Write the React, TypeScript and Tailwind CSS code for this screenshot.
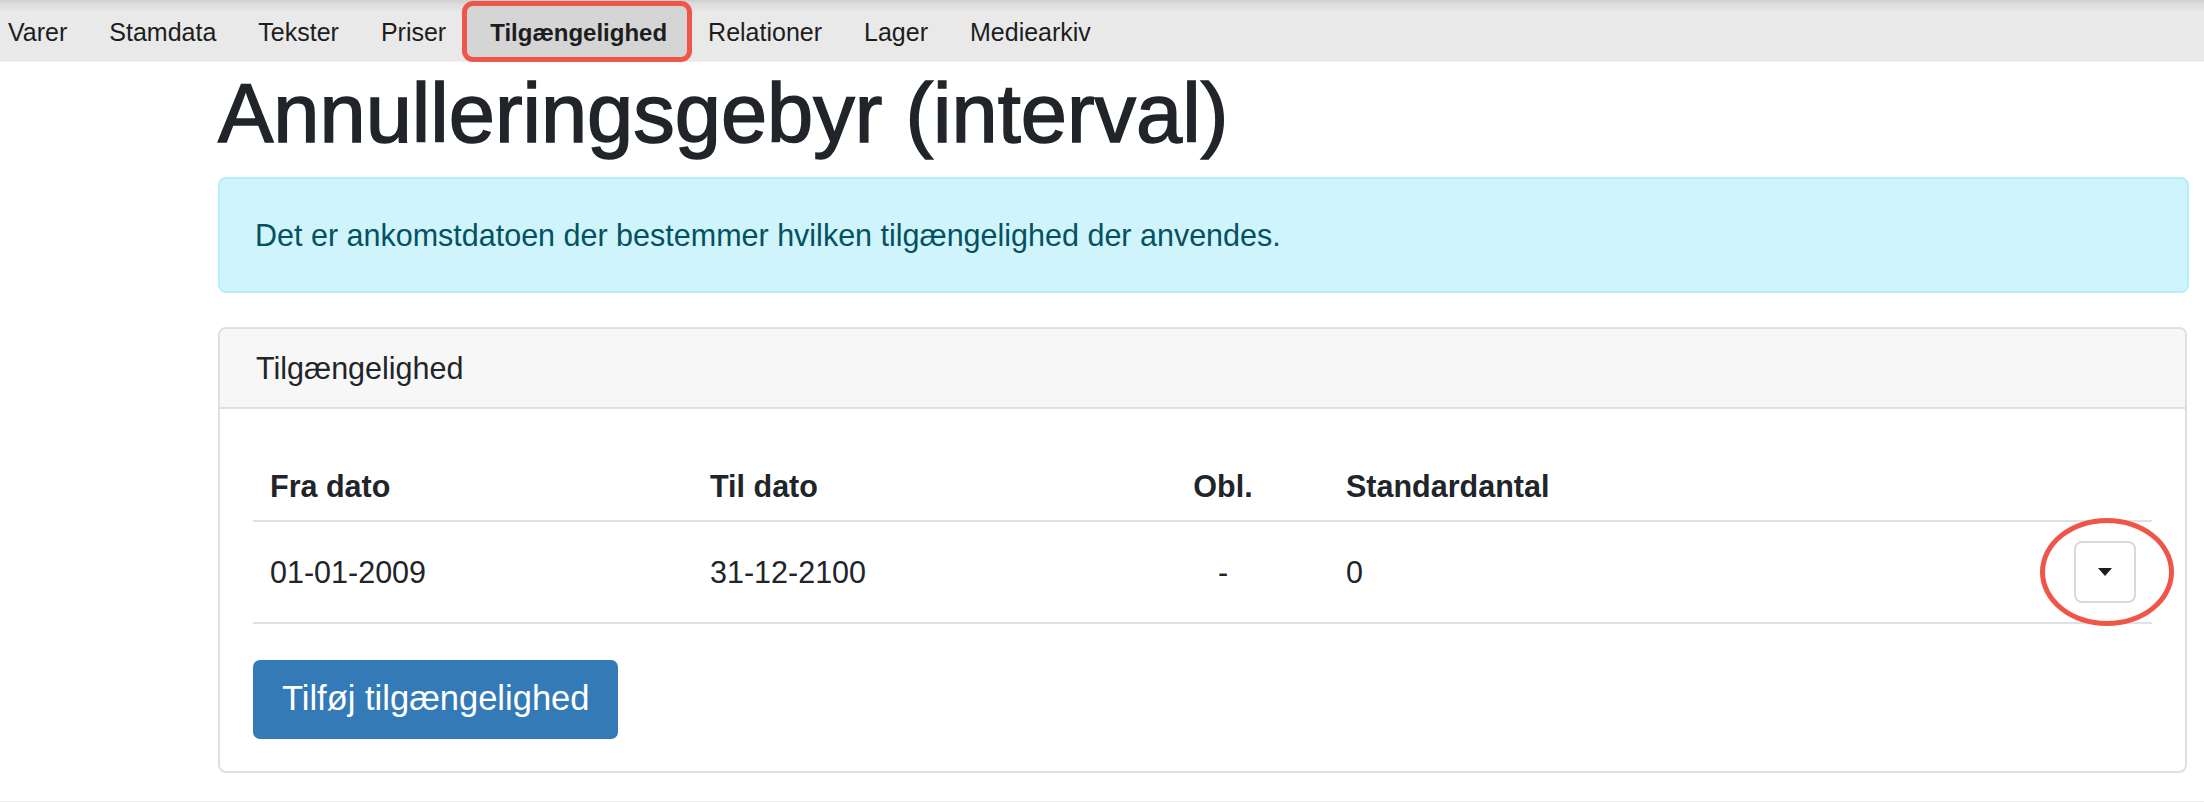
const tabs = ["Varer", "Stamdata", "Tekster", "Priser", "Tilgængelighed", "Relationer", "Lager", "Mediearkiv"];

const NavBar = () => {
    return (
        <div className="flex h-[62px] items-stretch border-t-2 border-[#d2d2d2] border-b border-b-[#f1f1f1] bg-[linear-gradient(#d8d8d8,#e9e9e9_10px)] text-[25px] text-[#1d1d1d]">
            {tabs.map((tab, i) => (
                tab === "Tilgængelighed" ? (
                    <div
                        key={tab}
                        className="my-[4px] flex items-center rounded-[6px] bg-[#d5d5d5] pl-[23px] pr-[20px] pt-[3px] text-[24px] font-bold outline-[5px] outline-solid outline-[#ef5548]"
                    >
                        {tab}
                    </div>
                ) : (
                    <div
                        key={tab}
                        className={i === 0 ? "flex items-center pt-[3px] pl-[8px] pr-[21px]" : "flex items-center px-[21px] pt-[3px]"}
                    >
                        {tab}
                    </div>
                )
            ))}
        </div>
    )
}

const AvailabilityTable = () => {
    return (
        <div className="text-[#212529]">
            <div className="grid grid-cols-[440px_424px_212px_1fr_auto] border-b-2 border-[#dee2e6] pt-[22px] pb-[11px] font-bold leading-[46px]">
                <div className="px-[17px]">Fra dato</div>
                <div className="px-[17px]">Til dato</div>
                <div className="px-[17px] text-center">Obl.</div>
                <div className="px-[17px]">Standardantal</div>
                <div className="w-[97px]"></div>
            </div>
            <div className="grid h-[102px] grid-cols-[440px_424px_212px_1fr_auto] items-center border-b-2 border-[#dee2e6] leading-[46px]">
                <div className="px-[17px]">01-01-2009</div>
                <div className="px-[17px]">31-12-2100</div>
                <div className="px-[17px] text-center">-</div>
                <div className="px-[17px]">0</div>
                <div className="pl-[19px] pr-[16px]">
                    <div className="relative">
                        <button className="flex h-[62px] w-[62px] items-center justify-center rounded-[8px] border-2 border-[#d9d9d9] bg-white">
                            <span className="block h-0 w-0 border-x-[7px] border-t-[8px] border-x-transparent border-t-[#1e1e1e]"></span>
                        </button>
                        <div className="pointer-events-none absolute -top-[23px] -left-[34px] h-[108px] w-[134px] rounded-[50%] border-[5px] border-[#ef5548]"></div>
                    </div>
                </div>
            </div>
        </div>
    )
}

export default function App() {
    return (
        <div className="min-h-[802px] bg-white font-['Liberation_Sans',Arial,sans-serif]">
            <NavBar/>
            <div className="ml-[218px] mr-[15px] pt-[2px]">
                <h1 className="mb-[13px] text-[83px] leading-[1.2] font-medium text-[#212529] [-webkit-text-stroke:1.5px_#212529]">
                    Annulleringsgebyr (interval)
                </h1>
                <div className="mb-[34px] rounded-[8px] border-2 border-[#b6effb] bg-[#cff4fc] px-[35px] py-[33px] text-[30.5px] leading-[46px] text-[#055160]">
                    Det er ankomstdatoen der bestemmer hvilken tilgængelighed der anvendes.
                </div>
                <div className="mr-[2px] rounded-[8px] border-2 border-[#dfdfdf] text-[30.5px]">
                    <div className="rounded-t-[6px] border-b-2 border-[#dfdfdf] bg-[#f7f7f7] px-[36px] py-[16px] leading-[46px] text-[#212529]">
                        Tilgængelighed
                    </div>
                    <div className="px-[33px] pt-[32px] pb-[32px]">
                        <AvailabilityTable/>
                        <button className="mt-[36px] h-[79px] rounded-[7px] bg-[#337ab7] px-[29px] text-[34.5px] text-white">
                            Tilføj tilgængelighed
                        </button>
                    </div>
                </div>
            </div>
            <div className="mt-[28px] h-[2px] bg-[#ececec]"></div>
        </div>
    )
}
